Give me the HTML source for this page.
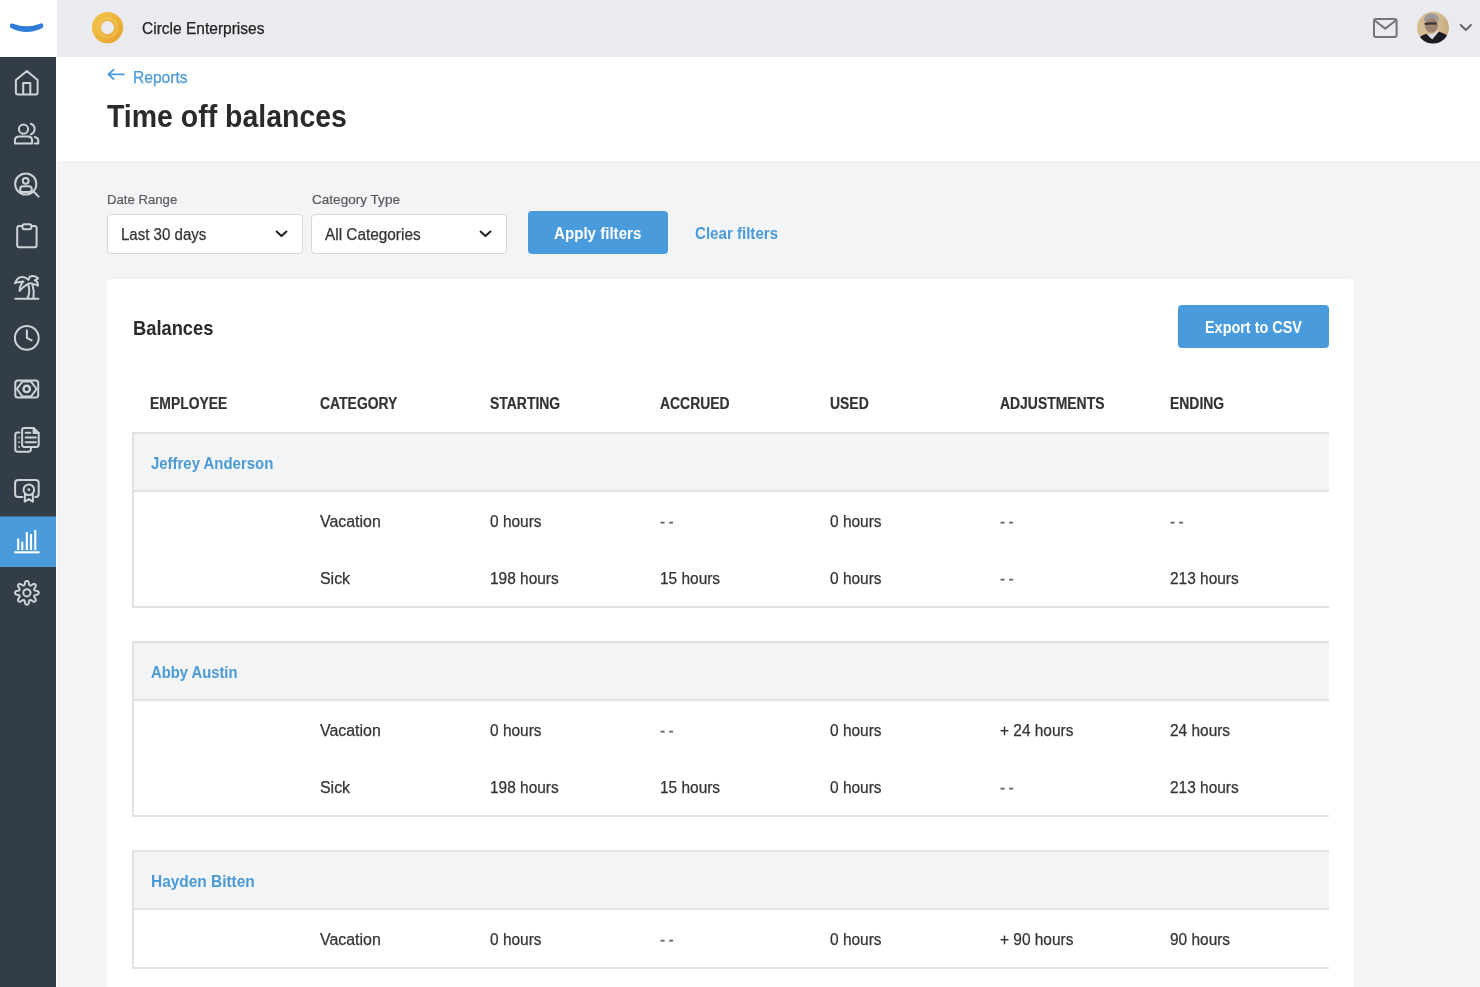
<!DOCTYPE html>
<html>
<head>
<meta charset="utf-8">
<style>
*{margin:0;padding:0;box-sizing:border-box}
html,body{width:1480px;height:987px;overflow:hidden}
body{position:relative;will-change:transform;background:#f3f4f6;font-family:"Liberation Sans",sans-serif;color:#333}
.abs{position:absolute;white-space:nowrap;line-height:1}
#logo{left:0;top:0;width:56px;height:57px;background:#fff}
#side{left:0;top:57px;width:56px;height:930px;background:#333d47}
#sideline{left:56px;top:0;width:1px;height:987px;background:#fff}
#top{left:57px;top:0;width:1423px;height:57px;background:#e9ebee}
#head{left:57px;top:57px;width:1423px;height:104px;background:#fff}
#card{left:107px;top:279px;width:1247px;height:760px;background:#fff;border-radius:5px}
.sel{position:absolute;top:214px;width:196px;height:40px;background:#fff;border:1.5px solid #d5d7d7;border-radius:4px}
.btn{position:absolute;background:#4a9bdb;border-radius:4px}
.lbl{font-size:13.5px;color:#58595c;-webkit-text-stroke:0.2px #58595c;transform:scaleX(0.975);transform-origin:0 0}
.val{font-size:16px;color:#333;-webkit-text-stroke:0.25px #333;transform-origin:0 0}
.th{font-size:16.8px;font-weight:bold;color:#333;-webkit-text-stroke:0.2px #333;transform:scaleX(0.83);transform-origin:0 0}
.td{font-size:16px;color:#333;-webkit-text-stroke:0.25px #333;transform:scaleX(0.965);transform-origin:0 0}
.dash{letter-spacing:-0.45px;color:#666;-webkit-text-stroke:0.3px #777}
.nm{font-size:16.8px;font-weight:bold;color:#4a9ad8;transform-origin:0 0}
.grp{position:absolute;left:133px;width:1196px;border-top:1.5px solid #dadddf;border-bottom:1.5px solid #dadddf;border-left:1.5px solid #dadddf}
.gh{position:absolute;left:0;top:0;width:100%;height:58px;background:#f3f4f6;border-bottom:1.5px solid #dadddf}
</style>
</head>
<body>
<div class="abs" id="top"></div>
<div class="abs" id="head"></div>
<div class="abs" id="logo"></div>
<div class="abs" id="side"></div>
<div class="abs" id="sideline"></div>

<svg class="abs" style="left:0;top:0" width="56" height="987" viewBox="0 0 56 987">
  <path d="M11.6 25 Q26.6 30.6 41.6 25 L41.6 26.6 Q26.6 34.4 11.6 26.6 Z" fill="#2f7bd8" stroke="#2f7bd8" stroke-width="3.2" stroke-linejoin="round"/>
  <rect x="0" y="516.5" width="56" height="50.5" fill="#4a9bdb"/>
  <g fill="none" stroke="#cfd2d6" stroke-width="2" stroke-linecap="round" stroke-linejoin="round">
    <!-- home -->
    <path d="M15.9 80 L26.9 71 L37.6 80 V92.6 Q37.6 94.6 35.6 94.6 H17.9 Q15.9 94.6 15.9 92.6 Z M23.2 94.6 V83 H30.3 V94.6"/>
    <g transform="translate(5,112)">
      <circle cx="18.5" cy="17.1" r="4.6"/>
      <path d="M9.9 31.6 V28.6 Q9.9 24.6 14.4 24.6 H22.6 Q27.1 24.6 27.1 28.6 V31.6 Z"/>
      <path d="M25.8 11.8 A5.6 5.6 0 0 1 25.8 22.4"/>
      <path d="M29.8 24.9 Q33.3 25.6 33.3 29.2 V31.6 H29.8"/>
    </g>
    <g transform="translate(5,163)">
      <circle cx="20.75" cy="21" r="10.6"/>
      <path d="M28.3 28.3 L33.6 33.6"/>
      <circle cx="20.7" cy="17.8" r="2.9"/>
      <rect x="15.1" y="23.3" width="11.7" height="5.8" rx="2.9"/>
    </g>
    <g transform="translate(5,214)">
      <path d="M16.6 11.9 H14.2 Q12.2 11.9 12.2 13.9 V31.2 Q12.2 33.2 14.2 33.2 H29.6 Q31.6 33.2 31.6 31.2 V13.9 Q31.6 11.9 29.6 11.9 H27.2"/>
      <rect x="17.4" y="10.3" width="9" height="5" rx="2"/>
    </g>
    <g transform="translate(5,265)">
      <path d="M10.3 33.7 H33.4"/>
      <path d="M23.2 19.4 Q25.5 26 22.8 32.8"/>
      <path d="M27.4 19.8 Q29.6 26.5 28.5 32.8"/>
      <path d="M23.4 14.8 Q19 10.6 13.8 12.8 Q11 14.5 9.9 18.2 Q12.6 16.6 15.4 17 Q17.4 16 18.4 16.6 Q15 19.4 14.6 25.9 Q18.5 21.3 23.4 18.6 Q26.5 17.4 29.2 19.5 Q31.5 19.2 32.9 20.8 Q33.2 16.5 29.8 15.3 Q33.3 13.5 33.1 13.3 Q29.5 9.6 24.8 11.6 Z"/>
    </g>
    <g transform="translate(5,316)">
      <circle cx="21.8" cy="21.9" r="11.9"/>
      <path d="M21.9 14.3 V21.9 L26.6 24.4"/>
    </g>
    <g transform="translate(5,367)">
      <rect x="10.3" y="13.5" width="22.9" height="17" rx="2.5"/>
      <path d="M17.6 14.4 H25.9 L31.6 22 L25.9 29.6 H17.6 L11.9 22 Z"/>
      <circle cx="21.7" cy="21.9" r="3.2" stroke-width="2.4"/>
    </g>
    <g transform="translate(5,418)">
      <path d="M14.4 14.5 H12.4 Q10.3 14.5 10.3 16.5 V31.6 Q10.3 33.7 12.4 33.7 H23.8 Q25.9 33.7 25.9 31.6 V29.6"/>
      <path d="M19.2 10.1 H28.6 L33.7 14.9 V26.8 Q33.7 28.9 31.6 28.9 H19.2 Q17.1 28.9 17.1 26.8 V12.2 Q17.1 10.1 19.2 10.1 Z"/>
      <path d="M20.6 14.8 H25.4 M20.6 19.6 H30.9 M20.6 24.2 H30.9"/>
      <path d="M28.6 10.3 V14.9 H33.5" fill="#cfd2d6"/>
      <circle cx="14.1" cy="19.6" r="0.9" fill="#cfd2d6" stroke="none"/><circle cx="14.1" cy="24.2" r="0.9" fill="#cfd2d6" stroke="none"/><circle cx="14.1" cy="29" r="0.9" fill="#cfd2d6" stroke="none"/>
    </g>
    <g transform="translate(5,468)">
      <path d="M17.4 29.1 H13.1 Q10.1 29.1 10.1 26.1 V14.9 Q10.1 11.9 13.1 11.9 H30.7 Q33.7 11.9 33.7 14.9 V26.1 Q33.7 29.1 30.7 29.1 H30.2"/>
      <circle cx="23.85" cy="21.7" r="5.3"/><circle cx="23.85" cy="21.7" r="1.4" fill="#cfd2d6" stroke="none"/>
      <path d="M20 26.2 L19.7 33.6 L23.8 31.2 L27.9 33.6 L27.8 26.2"/>
    </g>
    <g transform="translate(5,570)">
      <path d="M33.80 22.80 L33.73 22.34 L33.53 21.89 L33.18 21.47 L32.65 21.10 L31.61 20.87 L30.57 20.72 L30.03 20.51 L29.64 20.28 L29.37 20.05 L29.20 19.78 L29.13 19.47 L29.15 19.11 L29.27 18.67 L29.50 18.14 L30.13 17.30 L30.71 16.40 L30.82 15.77 L30.77 15.23 L30.59 14.76 L30.31 14.39 L29.94 14.11 L29.47 13.93 L28.93 13.88 L28.30 13.99 L27.40 14.57 L26.56 15.20 L26.03 15.43 L25.59 15.55 L25.23 15.57 L24.92 15.50 L24.65 15.33 L24.42 15.06 L24.19 14.67 L23.98 14.13 L23.83 13.09 L23.60 12.05 L23.23 11.52 L22.81 11.17 L22.36 10.97 L21.90 10.90 L21.44 10.97 L20.99 11.17 L20.57 11.52 L20.20 12.05 L19.97 13.09 L19.82 14.13 L19.61 14.67 L19.38 15.06 L19.15 15.33 L18.88 15.50 L18.57 15.57 L18.21 15.55 L17.77 15.43 L17.24 15.20 L16.40 14.57 L15.50 13.99 L14.87 13.88 L14.33 13.93 L13.86 14.11 L13.49 14.39 L13.21 14.76 L13.03 15.23 L12.98 15.77 L13.09 16.40 L13.67 17.30 L14.30 18.14 L14.53 18.67 L14.65 19.11 L14.67 19.47 L14.60 19.78 L14.43 20.05 L14.16 20.28 L13.77 20.51 L13.23 20.72 L12.19 20.87 L11.15 21.10 L10.62 21.47 L10.27 21.89 L10.07 22.34 L10.00 22.80 L10.07 23.26 L10.27 23.71 L10.62 24.13 L11.15 24.50 L12.19 24.73 L13.23 24.88 L13.77 25.09 L14.16 25.32 L14.43 25.55 L14.60 25.82 L14.67 26.13 L14.65 26.49 L14.53 26.93 L14.30 27.46 L13.67 28.30 L13.09 29.20 L12.98 29.83 L13.03 30.37 L13.21 30.84 L13.49 31.21 L13.86 31.49 L14.33 31.67 L14.87 31.72 L15.50 31.61 L16.40 31.03 L17.24 30.40 L17.77 30.17 L18.21 30.05 L18.57 30.03 L18.88 30.10 L19.15 30.27 L19.38 30.54 L19.61 30.93 L19.82 31.47 L19.97 32.51 L20.20 33.55 L20.57 34.08 L20.99 34.43 L21.44 34.63 L21.90 34.70 L22.36 34.63 L22.81 34.43 L23.23 34.08 L23.60 33.55 L23.83 32.51 L23.98 31.47 L24.19 30.93 L24.42 30.54 L24.65 30.27 L24.92 30.10 L25.23 30.03 L25.59 30.05 L26.03 30.17 L26.56 30.40 L27.40 31.03 L28.30 31.61 L28.93 31.72 L29.47 31.67 L29.94 31.49 L30.31 31.21 L30.59 30.84 L30.77 30.37 L30.82 29.83 L30.71 29.20 L30.13 28.30 L29.50 27.46 L29.27 26.93 L29.15 26.49 L29.13 26.13 L29.20 25.82 L29.37 25.55 L29.64 25.32 L30.03 25.09 L30.57 24.88 L31.61 24.73 L32.65 24.50 L33.18 24.13 L33.53 23.71 L33.73 23.26 L33.80 22.80Z"/>
      <circle cx="21.9" cy="22.8" r="3.6"/>
    </g>
  </g>
  <g transform="translate(5,519)" stroke="#fff" stroke-width="2.1" stroke-linecap="butt" fill="none">
    <path d="M9.3 33.3 H34.6"/>
    <path d="M13.2 19.5 V31 M17.3 22.8 V31 M21.8 13 V31 M26 15.1 V31 M30.3 11 V31"/>
  </g>
</svg>

<!-- top bar -->
<svg class="abs" style="left:91px;top:11px" width="34" height="34" viewBox="0 0 34 34">
  <defs><linearGradient id="ring" x1="0" y1="0" x2="1" y2="1"><stop offset="0" stop-color="#f2c14a"/><stop offset="1" stop-color="#e9a42e"/></linearGradient></defs>
  <circle cx="16.5" cy="16.6" r="11.1" fill="none" stroke="url(#ring)" stroke-width="9"/><circle cx="16.5" cy="16.6" r="9.6" fill="none" stroke="#f5d166" stroke-opacity="0.45" stroke-width="2.2"/>
</svg>
<div class="abs" style="left:142px;top:20.5px;font-size:16px;color:#222;-webkit-text-stroke:0.25px #222;transform:scaleX(0.97);transform-origin:0 0">Circle Enterprises</div>

<!-- header -->
<div class="abs" style="left:133px;top:69px;font-size:16.5px;color:#4a9ad8;-webkit-text-stroke:0.25px #4a9ad8;transform:scaleX(0.945);transform-origin:0 0">Reports</div>
<div class="abs" style="left:107.1px;top:101.1px;font-size:31px;font-weight:bold;color:#2a2a2a;transform:scaleX(0.918);transform-origin:0 0">Time off balances</div>

<!-- filters -->
<div class="abs lbl" style="left:107.3px;top:193px">Date Range</div>
<div class="abs lbl" style="left:312px;top:193px;transform:scaleX(1.005)">Category Type</div>
<div class="sel" style="left:107px"></div>
<div class="sel" style="left:311px"></div>
<div class="abs val" style="left:121px;top:227px;transform:scaleX(0.94)">Last 30 days</div>
<div class="abs val" style="left:325px;top:227px;transform:scaleX(0.96)">All Categories</div>
<div class="btn" style="left:528px;top:211px;width:140px;height:43px"></div>
<div class="abs" style="left:553.8px;top:224.5px;font-size:17px;font-weight:bold;color:#fff;transform:scaleX(0.889);transform-origin:0 0">Apply filters</div>
<div class="abs" style="left:695.0px;top:224.5px;font-size:17px;font-weight:bold;color:#4a9ad8;transform:scaleX(0.888);transform-origin:0 0">Clear filters</div>

<!-- card -->
<div class="abs" id="card"></div>
<div class="abs" style="left:133.0px;top:317.5px;font-size:20.5px;font-weight:bold;color:#2a2a2a;transform:scaleX(0.893);transform-origin:0 0">Balances</div>
<div class="btn" style="left:1178px;top:304.5px;width:151px;height:43px"></div>
<div class="abs" style="left:1204.7px;top:318.5px;font-size:16.5px;font-weight:bold;color:#fff;transform:scaleX(0.874);transform-origin:0 0">Export to CSV</div>


<!-- select chevrons -->
<svg class="abs" style="left:270px;top:225px" width="24" height="18" viewBox="0 0 24 18"><path d="M6.6 6.6 L11.5 11.1 L16.4 6.6" fill="none" stroke="#222" stroke-width="2.1" stroke-linecap="round" stroke-linejoin="round"/></svg>
<svg class="abs" style="left:474px;top:225px" width="24" height="18" viewBox="0 0 24 18"><path d="M6.6 6.6 L11.5 11.1 L16.4 6.6" fill="none" stroke="#222" stroke-width="2.1" stroke-linecap="round" stroke-linejoin="round"/></svg>
<!-- back arrow -->
<svg class="abs" style="left:104px;top:64px" width="24" height="20" viewBox="0 0 24 20"><path d="M20 10.3 H4.6 M9.6 5.6 L4.4 10.3 L9.6 15" fill="none" stroke="#4a9ad8" stroke-width="1.8" stroke-linecap="round" stroke-linejoin="round"/></svg>
<!-- mail -->
<svg class="abs" style="left:1368px;top:12px" width="34" height="32" viewBox="0 0 34 32"><rect x="6" y="7" width="22.6" height="17.9" rx="2" fill="none" stroke="#757575" stroke-width="2"/><path d="M6.8 8.5 L17.2 16.6 L27.8 8.5" fill="none" stroke="#757575" stroke-width="2" stroke-linejoin="round"/></svg>
<!-- avatar -->
<svg class="abs" style="left:1416px;top:11px" width="34" height="34" viewBox="0 0 34 34">
  <defs><clipPath id="av"><circle cx="17" cy="16.7" r="15.9"/></clipPath>
  <linearGradient id="bgp" x1="0" y1="0" x2="1" y2="0"><stop offset="0" stop-color="#d9bb8e"/><stop offset="0.6" stop-color="#d5bf9a"/><stop offset="1" stop-color="#c9a77a"/></linearGradient>
  <filter id="bl" x="-20%" y="-20%" width="140%" height="140%"><feGaussianBlur stdDeviation="0.7"/></filter></defs>
  <g clip-path="url(#av)">
    <rect width="34" height="34" fill="url(#bgp)"/>
    <g filter="url(#bl)">
    <ellipse cx="15.4" cy="14.2" rx="6.6" ry="7.6" fill="#9e8170"/>
    <path d="M7.6 12 Q7.2 2.5 15.5 2.2 Q23.8 2.5 23.4 11.5 Q22 7.4 16 7.6 Q9.5 7.6 7.6 12Z" fill="#9c9a98"/>
    <path d="M8.6 13 Q14.4 11.8 20.6 12.6" stroke="#3b3431" stroke-width="2.2" fill="none"/>
    <path d="M0 34 L1.5 28 Q3 25.5 10.5 22.8 L16.3 27.5 L22.8 20.4 Q29 22.5 32 25 L34 34Z" fill="#1f1f24"/>
    <path d="M10.8 23.2 L16.2 28.6 L22.8 20.6 L21 20 Q17 24 14 23.5 Z" fill="#d9dbe2"/>
    </g>
  </g>
</svg>
<svg class="abs" style="left:1456px;top:20px" width="20" height="16" viewBox="0 0 20 16"><path d="M4.7 5 L9.8 10 L14.9 5" fill="none" stroke="#666" stroke-width="2" stroke-linecap="round" stroke-linejoin="round"/></svg>
<!--TABLE-->
<div class="abs th" style="left:150px;top:395.9px">EMPLOYEE</div>
<div class="abs th" style="left:320px;top:395.9px">CATEGORY</div>
<div class="abs th" style="left:490px;top:395.9px">STARTING</div>
<div class="abs th" style="left:660px;top:395.9px">ACCRUED</div>
<div class="abs th" style="left:830px;top:395.9px">USED</div>
<div class="abs th" style="left:1000px;top:395.9px">ADJUSTMENTS</div>
<div class="abs th" style="left:1170px;top:395.9px">ENDING</div>
<div class="abs" style="left:133px;top:433px;width:1196px;height:58px;background:#f3f4f6"></div>
<div class="abs" style="left:132px;top:432px;width:1197px;height:2px;background:#e0e1e1"></div>
<div class="abs" style="left:132px;top:490px;width:1197px;height:2px;background:#e0e1e1"></div>
<div class="abs" style="left:132px;top:606px;width:1197px;height:2px;background:#e0e1e1"></div>
<div class="abs" style="left:132px;top:432px;width:2px;height:176px;background:#e0e1e1"></div>
<div class="abs nm" style="left:151px;top:455.5px;transform:scaleX(0.89)">Jeffrey Anderson</div>
<div class="abs td" style="left:320px;top:513.5px;transform:scaleX(0.995)">Vacation</div>
<div class="abs td" style="left:490px;top:513.5px">0 hours</div>
<div class="abs td dash" style="left:660px;top:513.5px">- -</div>
<div class="abs td" style="left:830px;top:513.5px">0 hours</div>
<div class="abs td dash" style="left:1000px;top:513.5px">- -</div>
<div class="abs td dash" style="left:1170px;top:513.5px">- -</div>
<div class="abs td" style="left:320px;top:570.5px;transform:scaleX(0.995)">Sick</div>
<div class="abs td" style="left:490px;top:570.5px">198 hours</div>
<div class="abs td" style="left:660px;top:570.5px">15 hours</div>
<div class="abs td" style="left:830px;top:570.5px">0 hours</div>
<div class="abs td dash" style="left:1000px;top:570.5px">- -</div>
<div class="abs td" style="left:1170px;top:570.5px">213 hours</div>
<div class="abs" style="left:133px;top:642px;width:1196px;height:58px;background:#f3f4f6"></div>
<div class="abs" style="left:132px;top:641px;width:1197px;height:2px;background:#e0e1e1"></div>
<div class="abs" style="left:132px;top:699px;width:1197px;height:2px;background:#e0e1e1"></div>
<div class="abs" style="left:132px;top:815px;width:1197px;height:2px;background:#e0e1e1"></div>
<div class="abs" style="left:132px;top:641px;width:2px;height:176px;background:#e0e1e1"></div>
<div class="abs nm" style="left:151px;top:664.5px;transform:scaleX(0.881)">Abby Austin</div>
<div class="abs td" style="left:320px;top:722.5px;transform:scaleX(0.995)">Vacation</div>
<div class="abs td" style="left:490px;top:722.5px">0 hours</div>
<div class="abs td dash" style="left:660px;top:722.5px">- -</div>
<div class="abs td" style="left:830px;top:722.5px">0 hours</div>
<div class="abs td" style="left:1000px;top:722.5px">+ 24 hours</div>
<div class="abs td" style="left:1170px;top:722.5px">24 hours</div>
<div class="abs td" style="left:320px;top:779.5px;transform:scaleX(0.995)">Sick</div>
<div class="abs td" style="left:490px;top:779.5px">198 hours</div>
<div class="abs td" style="left:660px;top:779.5px">15 hours</div>
<div class="abs td" style="left:830px;top:779.5px">0 hours</div>
<div class="abs td dash" style="left:1000px;top:779.5px">- -</div>
<div class="abs td" style="left:1170px;top:779.5px">213 hours</div>
<div class="abs" style="left:133px;top:851px;width:1196px;height:58px;background:#f3f4f6"></div>
<div class="abs" style="left:132px;top:850px;width:1197px;height:2px;background:#e0e1e1"></div>
<div class="abs" style="left:132px;top:908px;width:1197px;height:2px;background:#e0e1e1"></div>
<div class="abs" style="left:132px;top:967px;width:1197px;height:2px;background:#e0e1e1"></div>
<div class="abs" style="left:132px;top:850px;width:2px;height:119px;background:#e0e1e1"></div>
<div class="abs nm" style="left:151px;top:873.5px;transform:scaleX(0.919)">Hayden Bitten</div>
<div class="abs td" style="left:320px;top:931.5px;transform:scaleX(0.995)">Vacation</div>
<div class="abs td" style="left:490px;top:931.5px">0 hours</div>
<div class="abs td dash" style="left:660px;top:931.5px">- -</div>
<div class="abs td" style="left:830px;top:931.5px">0 hours</div>
<div class="abs td" style="left:1000px;top:931.5px">+ 90 hours</div>
<div class="abs td" style="left:1170px;top:931.5px">90 hours</div>
<!--/TABLE-->
</body>
</html>
